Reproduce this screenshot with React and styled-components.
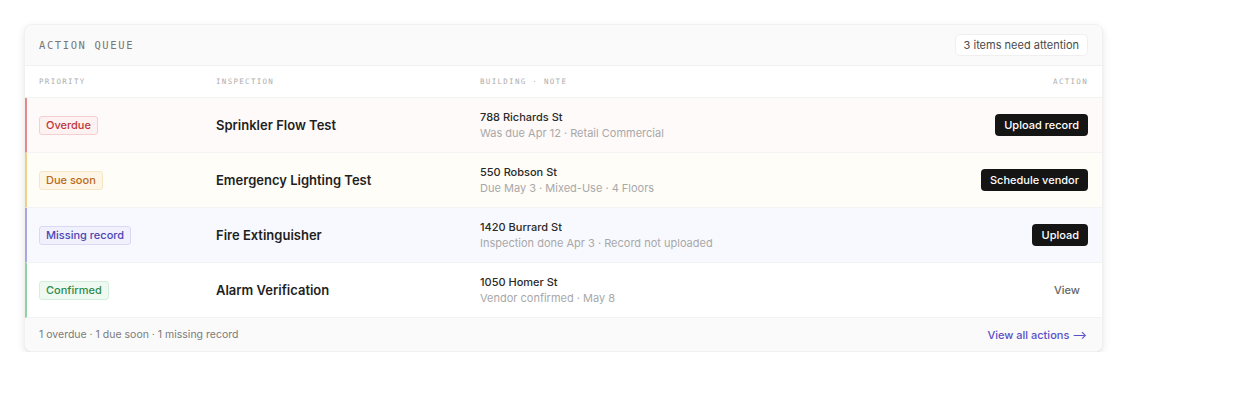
import React from "react";
import styled, { createGlobalStyle } from "styled-components";

const Global = createGlobalStyle`
  * { box-sizing: border-box; }
  body { margin: 0; background: #ffffff; font-family: Inter, "Noto Sans", sans-serif; -webkit-font-smoothing: antialiased; }
`;

const Page = styled.div`
  padding: 24px 149px 0 24px;
`;

const Card = styled.div`
  width: 1079px;
  background: #fff;
  border-radius: 8px;
  border: 1px solid #f0f0f0;
  box-shadow: 0 3px 8px rgba(0,0,0,0.09), 0 1px 2px rgba(0,0,0,0.04);
  overflow: hidden;
`;

const Header = styled.div`
  display: flex;
  align-items: center;
  justify-content: space-between;
  height: 41px;
  padding: 0 14px;
  background: #fafafa;
  border-bottom: 1px solid #f0f0f0;
`;

const Title = styled.div`
  font-family: "DejaVu Sans Mono", "Liberation Mono", monospace;
  font-size: 10.5px;
  letter-spacing: 1.6px;
  color: #777;
`;

const Pill = styled.div`
  font-size: 11px;
  color: #4a4a4a;
  background: #fff;
  border: 1px solid #efefef;
  border-radius: 5px;
  padding: 3px 8px;
`;

const Grid = styled.div`
  display: grid;
  grid-template-columns: 177px 264px 1fr auto;
  align-items: center;
  padding: 0 14px 0 14px;
`;

const HeadRow = styled(Grid)`
  height: 32px;
  border-bottom: 1px solid #f3f3f3;
`;

const ColLabel = styled.div`
  font-family: "DejaVu Sans Mono", "Liberation Mono", monospace;
  font-size: 7.5px;
  letter-spacing: 1.3px;
  color: #adadad;
  text-align: ${p => (p.$right ? "right" : "left")};
`;

const Row = styled(Grid)`
  height: 55px;
  background: ${p => p.$bg};
  border-left: 2px solid ${p => p.$accent};
  border-bottom: 1px solid #f3f3f3;
  padding-left: 12px;
`;

const Badge = styled.span`
  justify-self: start;
  font-size: 11px;
  font-weight: 500;
  color: ${p => p.$color};
  background: ${p => p.$bg};
  border: 1px solid ${p => p.$border};
  border-radius: 3px;
  padding: 1px 6px;
  line-height: 15px;
`;

const Name = styled.div`
  font-size: 13px;
  font-weight: 600;
  color: #1f1f1f;
`;

const Info = styled.div`
  display: flex;
  flex-direction: column;
  gap: 2px;
`;

const Address = styled.div`
  font-size: 11px;
  font-weight: 500;
  color: #2a2a2a;
`;

const Note = styled.div`
  font-size: 11px;
  color: #a8a8a8;
`;

const ActionBtn = styled.button`
  justify-self: end;
  font-family: Inter, "Noto Sans", sans-serif;
  font-size: 11px;
  font-weight: 500;
  color: ${p => (p.$ghost ? "#666" : "#fff")};
  background: ${p => (p.$ghost ? "transparent" : "#151515")};
  border: none;
  border-radius: 4px;
  padding: 0 ${p => (p.$ghost ? "8px" : "9px")};
  height: 22px;
  cursor: pointer;
`;

const Footer = styled.div`
  display: flex;
  align-items: center;
  justify-content: space-between;
  height: 33px;
  padding: 0 15px 0 14px;
  background: #fafafa;
`;

const FootText = styled.div`
  font-size: 10.5px;
  color: #7a7a7a;
`;

const FootLink = styled.a`
  font-size: 11px;
  font-weight: 500;
  color: #5b4fc7;
  text-decoration: none;
`;

const rows = [
  {
    badge: "Overdue", bColor: "#c0353a", bBg: "#fdf1f1", bBorder: "#f3cfcf",
    bg: "#fefaf9", accent: "#e28a8a",
    name: "Sprinkler Flow Test", addr: "788 Richards St", note: "Was due Apr 12 · Retail Commercial",
    action: "Upload record",
  },
  {
    badge: "Due soon", bColor: "#b86a1c", bBg: "#fdf5e6", bBorder: "#f6e6c6",
    bg: "#fffdf8", accent: "#f0cf86",
    name: "Emergency Lighting Test", addr: "550 Robson St", note: "Due May 3 · Mixed-Use · 4 Floors",
    action: "Schedule vendor",
  },
  {
    badge: "Missing record", bColor: "#4b45b5", bBg: "#f1f1fd", bBorder: "#d9d9f6",
    bg: "#f8f9fe", accent: "#a9a6e6",
    name: "Fire Extinguisher", addr: "1420 Burrard St", note: "Inspection done Apr 3 · Record not uploaded",
    action: "Upload",
  },
  {
    badge: "Confirmed", bColor: "#2f8a4b", bBg: "#eefaf1", bBorder: "#d3efdb",
    bg: "#ffffff", accent: "#8fd3a4",
    name: "Alarm Verification", addr: "1050 Homer St", note: "Vendor confirmed · May 8",
    action: "View", ghost: true,
  },
];

export default function App() {
  return (
    <>
      <Global />
      <Page>
        <Card>
          <Header>
            <Title>ACTION QUEUE</Title>
            <Pill>3 items need attention</Pill>
          </Header>
          <HeadRow>
            <ColLabel>PRIORITY</ColLabel>
            <ColLabel>INSPECTION</ColLabel>
            <ColLabel>BUILDING · NOTE</ColLabel>
            <ColLabel $right>ACTION</ColLabel>
          </HeadRow>
          {rows.map(r => (
            <Row key={r.name} $bg={r.bg} $accent={r.accent}>
              <Badge $color={r.bColor} $bg={r.bBg} $border={r.bBorder}>{r.badge}</Badge>
              <Name>{r.name}</Name>
              <Info>
                <Address>{r.addr}</Address>
                <Note>{r.note}</Note>
              </Info>
              <ActionBtn $ghost={r.ghost}>{r.action}</ActionBtn>
            </Row>
          ))}
          <Footer>
            <FootText>1 overdue · 1 due soon · 1 missing record</FootText>
            <FootLink href="#">View all actions ⟶</FootLink>
          </Footer>
        </Card>
      </Page>
    </>
  );
}
